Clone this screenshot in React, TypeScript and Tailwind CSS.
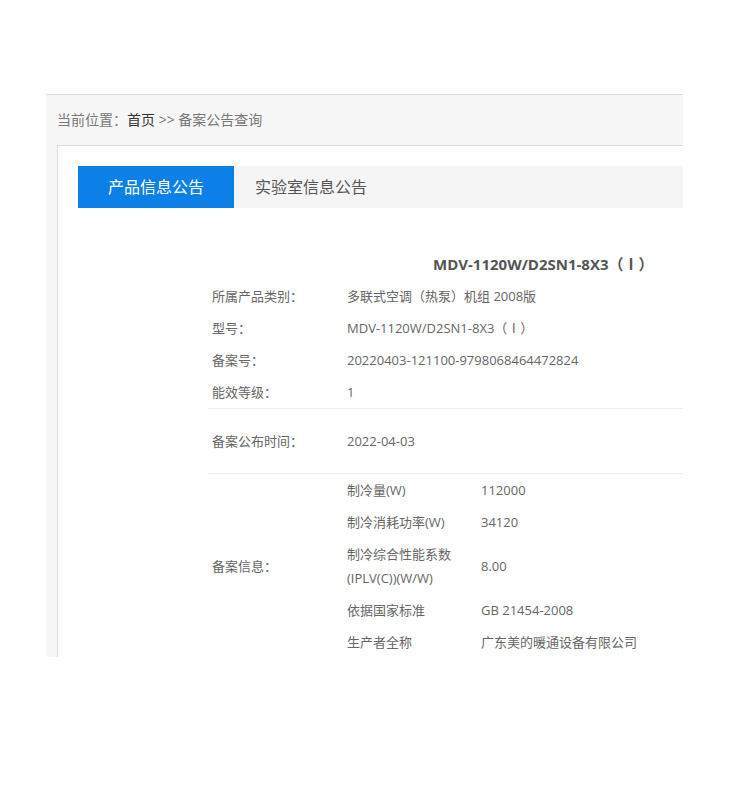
export default function App() {
  const font = { fontFamily: '"Open Sans", "Noto Sans CJK SC", sans-serif' };
  return (
    <div className="w-[750px] h-[800px] bg-white pt-[94px] pl-[46px]" style={font}>
      <div className="w-[637px] h-[563px] overflow-hidden bg-[#f7f7f7] border-t border-[#dddddd]">
        <div className="w-[900px]">
          <div className="pl-[11px] pt-[15px] h-[50px] text-sm leading-5 text-[#777]">
            当前位置：<span className="text-[#333]">首页</span> &gt;&gt; 备案公告查询
          </div>
          <div className="ml-[11px] bg-white border-l border-t border-[#dddddd] pt-5 pl-5 pb-10">
            <div className="flex h-[42px] bg-[#f5f5f5] text-base">
              <div className="w-[156px] bg-[#0c80e6] text-white flex items-center justify-center">产品信息公告</div>
              <div className="pl-[21px] flex items-center text-[#555]">实验室信息公告</div>
            </div>

            <div className="ml-[130px] mt-10 w-[560px] text-[13px] text-[#666]">
              <div className="h-8 leading-8 pl-[225px] text-[15px] font-bold text-[#555]">MDV-1120W/D2SN1-8X3（Ⅰ）</div>
              <div className="flex py-1 leading-6">
                <div className="w-[139px] pl-1">所属产品类别：</div>
                <div>多联式空调（热泵）机组 2008版</div>
              </div>
              <div className="flex py-1 leading-6">
                <div className="w-[139px] pl-1">型号：</div>
                <div>MDV-1120W/D2SN1-8X3（Ⅰ）</div>
              </div>
              <div className="flex py-1 leading-6">
                <div className="w-[139px] pl-1">备案号：</div>
                <div>20220403-121100-9798068464472824</div>
              </div>
              <div className="flex py-1 leading-6 border-b border-[#eeeeee]">
                <div className="w-[139px] pl-1">能效等级：</div>
                <div>1</div>
              </div>
              <div className="flex py-5 leading-6 border-b border-[#eeeeee]">
                <div className="w-[139px] pl-1">备案公布时间：</div>
                <div>2022-04-03</div>
              </div>
              <div className="flex items-center">
                <div className="w-[139px] pl-1 leading-6">备案信息：</div>
                <div className="flex-1">
                  {[
                    ["制冷量(W)", "112000"],
                    ["制冷消耗功率(W)", "34120"],
                    ["制冷综合性能系数(IPLV(C))(W/W)", "8.00"],
                    ["依据国家标准", "GB 21454-2008"],
                    ["生产者全称", "广东美的暖通设备有限公司"],
                  ].map(([k, v]) => (
                    <div key={k} className="flex items-center py-1 leading-6">
                      <div className="w-[134px] pr-4">{k}</div>
                      <div>{v}</div>
                    </div>
                  ))}
                </div>
              </div>
            </div>
          </div>
        </div>
      </div>
    </div>
  );
}
